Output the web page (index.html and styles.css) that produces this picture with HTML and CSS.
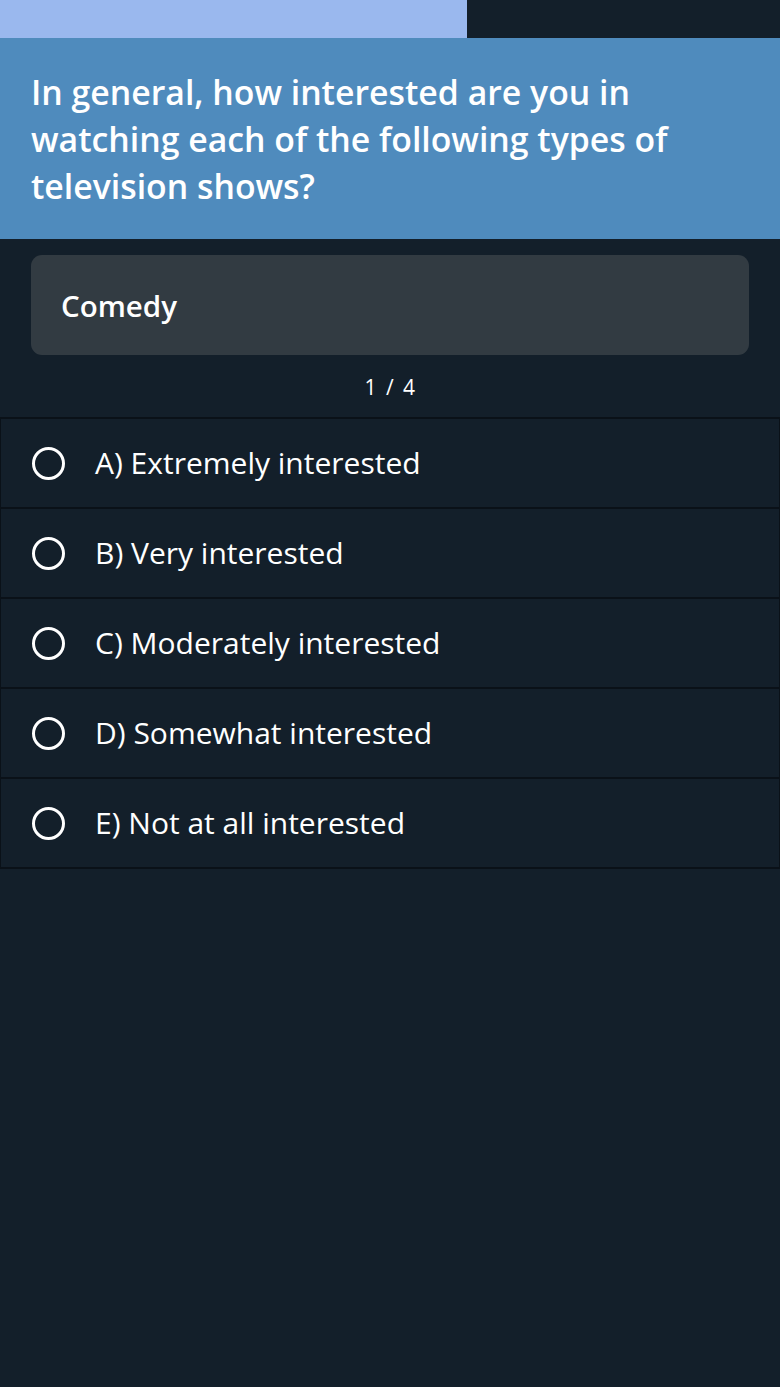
FILE: index.html
```html
<!DOCTYPE html>
<html>
<head>
<meta charset="utf-8">
<link rel="stylesheet" href="styles.css">
</head>
<body>
<div class="progress"><div class="progress-fill" style="width:467px"></div></div>
<div class="question">
  <h1>In general, how interested are you in watching each of the following types of television shows?</h1>
</div>
<div class="content">
  <div class="card">Comedy</div>
  <div class="counter">1 / 4</div>
</div>
<div class="options">
  <div class="option"><span class="radio"></span><span class="label">A) Extremely interested</span></div>
  <div class="option"><span class="radio"></span><span class="label">B) Very interested</span></div>
  <div class="option"><span class="radio"></span><span class="label">C) Moderately interested</span></div>
  <div class="option"><span class="radio"></span><span class="label">D) Somewhat interested</span></div>
  <div class="option"><span class="radio"></span><span class="label">E) Not at all interested</span></div>
</div>
</body>
</html>
```
FILE: styles.css
```css
html, body {
  margin: 0;
  padding: 0;
  background: #131f2a;
  color: #ffffff;
  font-family: "Open Sans", "Noto Sans", sans-serif;
}
body {
  width: 780px;
  min-height: 1387px;
}
.progress {
  height: 38px;
  background: #131f2a;
}
.progress-fill {
  height: 100%;
  background: #9ab8ee;
}
.question {
  background: #4f8bbd;
  padding: 31px 31px 29px;
  height: 141px;
}
.question h1 {
  margin: 0;
  font-size: 33.8px;
  line-height: 47px;
  font-weight: 600;
}
.content {
  padding: 16px 31px 0;
}
.card {
  background: #323b42;
  border-radius: 11px;
  height: 100px;
  display: flex;
  align-items: center;
  padding: 0 30px;
  font-size: 29.5px;
  font-weight: 600;
}
.counter {
  text-align: center;
  font-size: 21px;
  height: 62px;
  line-height: 64px;
  word-spacing: 3px;
  letter-spacing: 0.5px;
}
.options {
  display: flex;
  flex-direction: column;
}
.option {
  height: 88px;
  border: 1px solid #0a1118;
  border-width: 2px 1px 0;
  display: flex;
  align-items: center;
  padding-left: 31px;
  font-size: 30px;
}
.option:last-child {
  border-bottom-width: 2px;
}
.radio {
  width: 27px;
  height: 27px;
  border: 3px solid #ffffff;
  border-radius: 50%;
  margin-right: 30px;
  flex: none;
}
.label {
  line-height: 40px;
}
```
